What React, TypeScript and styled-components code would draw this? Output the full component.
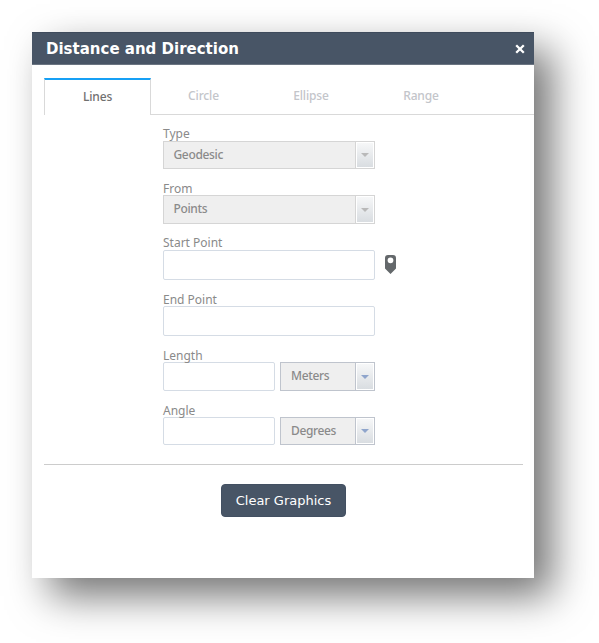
import React from "react";
import styled, { createGlobalStyle } from "styled-components";

const GlobalStyle = createGlobalStyle`
  *, *::before, *::after { box-sizing: border-box; }
  body { margin: 0; background: #fff; font-family: "Noto Sans", "Open Sans", sans-serif; }
`;

const Page = styled.main`
  height: 643px;
  padding: 32px;
  overflow: hidden;
`;

const Panel = styled.section`
  width: 502px;
  height: 546px;
  background: #fff;
  box-shadow: 18px 18px 38px rgba(0, 0, 0, 0.55);
`;

const Header = styled.header`
  display: flex;
  align-items: center;
  justify-content: space-between;
  height: 33px;
  padding: 0 9px 0 14px;
  background: #485566;
  border-top: 1px solid #3f4b5c;
  border-bottom: 1px solid #6b7582;
`;

const Title = styled.h1`
  margin: 0;
  padding-top: 2px;
  color: #fff;
  font-family: "DejaVu Sans", sans-serif;
  font-size: 15px;
  font-weight: 700;
  line-height: 29px;
  white-space: nowrap;
`;

const CloseButton = styled.button`
  display: flex;
  padding: 0;
  border: 0;
  background: none;
`;

const Tabs = styled.nav`
  display: flex;
  height: 37px;
  margin: 13px 0 0 12px;
`;

const Tab = styled.button<{ $active?: boolean; $width: number }>`
  flex: none;
  width: ${(p) => p.$width}px;
  padding: 0 0 2px;
  border: 0 solid #d9d9d9;
  border-width: ${(p) => (p.$active ? "2px 1px 0 1px" : "0 0 1px")};
  ${(p) => p.$active && "border-top-color: #16a0f5;"}
  background: #fff;
  color: ${(p) => (p.$active ? "#707070" : "#c3c5ca")};
  font: 500 12px "Noto Sans", sans-serif;
  letter-spacing: -0.15px;
`;

const TabFill = styled.span`
  flex: 1;
  border-bottom: 1px solid #d9d9d9;
`;

const Form = styled.form`
  width: 212px;
  height: 337px;
  margin: 12px 0 0 131px;
`;

const Field = styled.div`
  margin-bottom: 12px;
`;

const Label = styled.label<{ $low?: boolean }>`
  display: block;
  position: relative;
  z-index: 1;
  height: 14px;
  color: #8a8a8a;
  font-size: 12px;
  line-height: ${(p) => (p.$low ? 16 : 14)}px;
  white-space: nowrap;
`;

const Row = styled.div`
  display: flex;
  gap: 5px;
`;

const Input = styled.input<{ $width: number; $height: number }>`
  display: block;
  flex: none;
  width: ${(p) => p.$width}px;
  height: ${(p) => p.$height}px;
  border: 1px solid #d5dce5;
  border-radius: 2px;
  background: #fff;
`;

const SelectBox = styled.div<{ $width: number; $height: number; $enabled?: boolean }>`
  display: flex;
  flex: none;
  width: ${(p) => p.$width}px;
  height: ${(p) => p.$height}px;
  border: 1px solid ${(p) => (p.$enabled ? "#bfc4cd" : "#d5d5d5")};
  background: #efefef;
  color: #8a8a8a;
`;

const SelectText = styled.span<{ $enabled?: boolean }>`
  flex: 1;
  padding-left: ${(p) => (p.$enabled ? 10 : 9.5)}px;
  font-size: 12px;
  font-weight: 500;
  letter-spacing: -0.35px;
  line-height: 26px;
  white-space: nowrap;
`;

const ArrowCell = styled.span<{ $enabled?: boolean }>`
  display: flex;
  align-items: center;
  justify-content: center;
  width: 18px;
  border: 1px solid #fff;
  background: linear-gradient(#f6f7f8, #d9dde1);
  box-shadow: -1px 0 0 ${(p) => (p.$enabled ? "#bfc4cd" : "#d5d5d5")};
  color: ${(p) => (p.$enabled ? "#8fa5cc" : "#b9b9b9")};
`;

const PinButton = styled.button`
  display: flex;
  flex: none;
  align-items: center;
  margin-left: 5px;
  padding: 0 0 1px;
  border: 0;
  background: none;
`;

const Footer = styled.footer`
  display: flex;
  justify-content: center;
  margin: 0 11px 0 12px;
  padding: 19px 0 0;
  border-top: 1px solid #ccc;
`;

const ClearButton = styled.button`
  width: 125px;
  height: 33px;
  padding: 0;
  border: 1px solid #435062;
  border-radius: 4px;
  background: #485566;
  color: #fff;
  font: 400 13px "DejaVu Sans", sans-serif;
  white-space: nowrap;
`;

interface SelectProps {
  value: string;
  width: number;
  height?: number;
  enabled?: boolean;
}

const Select = ({ value, width, height = 28, enabled }: SelectProps) => (
  <SelectBox $width={width} $height={height} $enabled={enabled}>
    <SelectText $enabled={enabled}>{value}</SelectText>
    <ArrowCell $enabled={enabled}>
      <svg width="8" height="4" viewBox="0 0 8 4">
        <path d="M0 0h8L4 4z" fill="currentColor" />
      </svg>
    </ArrowCell>
  </SelectBox>
);

export default function App() {
  return (
    <Page>
      <GlobalStyle />
      <Panel>
        <Header>
          <Title>Distance and Direction</Title>
          <CloseButton aria-label="Close">
            <svg width="10" height="10" viewBox="0 0 10 10">
              <path d="M1.2 1.2l7.6 7.6M8.8 1.2L1.2 8.8" stroke="#fff" strokeWidth="2.3" />
            </svg>
          </CloseButton>
        </Header>
        <Tabs>
          <Tab $active $width={107}>Lines</Tab>
          <Tab $width={105}>Circle</Tab>
          <Tab $width={110}>Ellipse</Tab>
          <Tab $width={110}>Range</Tab>
          <TabFill />
        </Tabs>
        <Form>
          <Field>
            <Label>Type</Label>
            <Select value="Geodesic" width={212} />
          </Field>
          <Field>
            <Label $low>From</Label>
            <Select value="Points" width={212} height={29} />
          </Field>
          <Field>
            <Label>Start Point</Label>
            <Row>
              <Input $width={211.5} $height={30} />
              <PinButton type="button" aria-label="Pick start point">
                <svg width="11" height="19" viewBox="0 0 11 19">
                  <path
                    d="M3 0h5Q11 0 11 3V13.5L5.5 19L0 13.5V3Q0 0 3 0zM5.5 2.4a2.9 2.9 0 1 0 0 5.8a2.9 2.9 0 1 0 0-5.8z"
                    fill="#64686b"
                    fillRule="evenodd"
                  />
                </svg>
              </PinButton>
            </Row>
          </Field>
          <Field>
            <Label $low>End Point</Label>
            <Input $width={211.5} $height={30} />
          </Field>
          <Field>
            <Label $low>Length</Label>
            <Row>
              <Input $width={112} $height={29} />
              <Select value="Meters" width={95} height={29} enabled />
            </Row>
          </Field>
          <Field>
            <Label $low>Angle</Label>
            <Row>
              <Input $width={112} $height={28} />
              <Select value="Degrees" width={95} enabled />
            </Row>
          </Field>
        </Form>
        <Footer>
          <ClearButton type="button">Clear Graphics</ClearButton>
        </Footer>
      </Panel>
    </Page>
  );
}
